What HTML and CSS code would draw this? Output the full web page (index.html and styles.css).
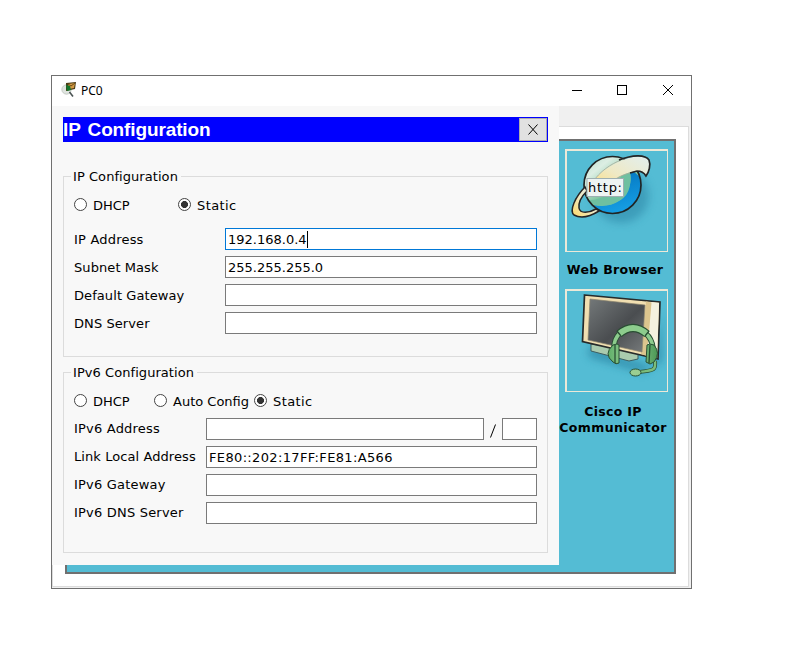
FILE: index.html
```html
<!DOCTYPE html>
<html lang="en">
<head>
<meta charset="utf-8">
<title>PC0</title>
<link rel="stylesheet" href="styles.css">
</head>
<body>
<main class="window">
  <header class="titlebar">
    <svg class="app-icon" width="16" height="16" viewBox="0 0 16 16">
      <circle cx="5.500" cy="7.500" r="4.700" fill="#dfe4df" stroke="#b5bcb5" stroke-width=".7"/>
      <path d="M5 1L15 0L14 7L5 9Z" fill="#493c16"/>
      <path d="M7 2L14 1L13 6L8 7Z" fill="#d39a45"/>
      <path d="M7 2L10 4L14 1" fill="none" stroke="#6b4b12"/>
      <path d="M5 3L9 4L10 8L6 9Z" fill="#13752a"/>
      <path d="M8.500 10L12 14.500" stroke="#4c5555" stroke-width="1.600"/>
    </svg>
    <span class="window-name">PC0</span>
    <svg class="controls" width="104" height="14" viewBox="0 0 104 14" fill="none" stroke="#000" shape-rendering="crispEdges">
      <path d="M1 7.500H11M46.500 2.500H55.500V11.500H46.500Z"/>
      <path d="M92 2L102 12M102 2L92 12" shape-rendering="auto"/>
    </svg>
  </header>
  <div class="client">
    <div class="tab-pane">
      <div class="desktop">
        <div class="apps">
          <div class="tile">
            <svg width="100" height="100" viewBox="0 0 100 100">
              <defs>
                <linearGradient id="globe" x2=".8" y2="1"><stop offset="0" stop-color="#b8dccb"/><stop offset=".25" stop-color="#dceee3"/><stop offset=".58" stop-color="#7fc5a0"/><stop offset="1" stop-color="#43b2ab"/></linearGradient>
                <linearGradient id="sea" x2=".3" y2="1"><stop offset="0" stop-color="#0070bc"/><stop offset="1" stop-color="#159ce1"/></linearGradient>
                <linearGradient id="ring" x1="1" x2="0" y2="1"><stop offset="0" stop-color="#e2efef"/><stop offset=".5" stop-color="#efe9c4"/><stop offset="1" stop-color="#ffd968"/></linearGradient>
                <filter id="soft" x="-40%" y="-40%" width="180%" height="180%"><feGaussianBlur stdDeviation="4"/></filter>
              </defs>
              <ellipse cx="54" cy="45" rx="28" ry="27" fill="#277fa0" opacity=".5" filter="url(#soft)"/>
              <circle cx="45.500" cy="34" r="28.500" fill="url(#globe)"/>
              <path d="M66 20L73 26Q77 43 65 55Q51 66 34 60Q28 57 26 54Q53 59 62 36Q65 28 63 22Z" fill="url(#sea)"/>
              <path d="M63 22Q66 44 50 51Q38 57 25 53L22 49Q44 49 54 25Z" fill="#6ec0a0"/>
              <circle cx="45.500" cy="34" r="28.500" fill="none" stroke="#202424" stroke-width="1.700"/>
              <path d="M18 36C8 46 2 60 7 64C14 68 24 65 32 60L29 58C22 62 13 63 12 57C11 50 15 45 20 40Z" fill="url(#ring)" stroke="#252525" stroke-width="1.500"/>
              <path d="M25 32C33 20 50 9 66 6Q77 4 82 9C84 14 82 21 79 25Q76 20 70 20C58 21 47 28 37 37L20 44Z" fill="url(#ring)"/>
              <path d="M25 32C33 20 44 13 54 9M37 37C47 28 54 24 63 22" fill="none" stroke="#a5aa98" stroke-width=".8"/>
              <path d="M52 9C65 4 78 3 82 9C84 14 82 21 79 25Q76 20 70 20L63 22" fill="none" stroke="#252525" stroke-width="1.700"/>
              <rect x="20" y="27.500" width="36.500" height="18" fill="#edf4f3" stroke="#9eafb1"/>
              <text class="http" x="21" y="40.500" textLength="34">http:</text>
            </svg>
          </div>
          <p class="caption browser">Web Browser</p>
          <div class="tile">
            <svg width="100" height="100" viewBox="0 0 100 100">
              <defs>
                <linearGradient id="screen" x2="1" y2="1"><stop offset="0" stop-color="#74797a"/><stop offset=".55" stop-color="#4a4d50"/><stop offset="1" stop-color="#777b7c"/></linearGradient>
                <linearGradient id="green" x2="1"><stop offset="0" stop-color="#5fae68"/><stop offset=".45" stop-color="#a1d59c"/><stop offset="1" stop-color="#4b9855"/></linearGradient>
              </defs>
              <path d="M22 54L85 76L95 21L95 70L76 82L22 66Z" fill="#20799a" opacity=".6" filter="url(#soft)"/>
              <path d="M24 53V60L62 70L71 68V60Z" fill="#a9cbae" stroke="#3e5e60"/>
              <path d="M17.500 4L93 11L91 68L15.500 50.500Z" fill="#f1dfb1" stroke="#272b2b" stroke-width="1.700"/>
              <path d="M84 11L92 12L90 66L80 64Z" fill="#f5f2df"/>
              <path d="M79 10.500L84.500 11.500L80 65L74 63Z" fill="#dcc58e"/>
              <path d="M23 8L78 14L75 61L21 49Z" fill="url(#screen)" stroke="#8a826d" stroke-width=".7"/>
              <g fill="none">
                <path d="M47 57C47 31 83 31 86 57" stroke="#284d32" stroke-width="5.500"/>
                <path d="M52 43Q66 31 80 43" stroke="#284d32" stroke-width="8"/>
                <path d="M47 57C47 31 83 31 86 57" stroke="#8dcc8d" stroke-width="3.600"/>
                <path d="M52 43Q66 31 80 43" stroke="#8dcc8d" stroke-width="6"/>
                <path d="M88 70C89 80 86 79 73 81" stroke="#284d32" stroke-width="4"/>
                <path d="M88 70C89 80 86 79 73 81" stroke="#7cbd7b" stroke-width="2.500"/>
              </g>
              <path d="M46 54Q51 52 52 54V72Q49 74 46 71Q36 63 46 54ZM80 54Q82 52 87 54Q94 62 87 71L83 73L79 71Z" fill="url(#green)" stroke="#285033"/>
              <path d="M48 54V72M83 54L82 72M50 40L54 45M82 40L78 45" stroke="#285033" stroke-width="1.300"/>
              <ellipse cx="68.500" cy="81.500" rx="5.500" ry="3.500" fill="#9bce91" stroke="#285033"/>
            </svg>
          </div>
          <p class="caption cisco"><span class="w1">Cisco IP</span><br><span class="w2">Communicator</span></p>
        </div>
      </div>
    </div>
    <section class="dialog">
      <div class="dialog-head">
        <h1>IP Configuration</h1>
        <button class="close" aria-label="Close"><svg width="10" height="11" viewBox="0 0 10 11"><path d="M.5 .5L9.500 10.500M9.500 .5L.5 10.500" stroke="#000" fill="none"/></svg></button>
      </div>
      <div class="group v4">
        <div class="legend"><span>IP Configuration</span></div>
        <div class="radios">
          <div class="radio"><i></i><span>DHCP</span></div>
          <div class="radio"><i class="on"></i><span class="static">Static</span></div>
        </div>
        <div class="rows">
          <div class="row"><span class="label wide">IP Address</span><div class="field focus"><span class="ip">192.168.0.4</span></div></div>
          <div class="row"><span class="label">Subnet Mask</span><div class="field"><span class="mask">255.255.255.0</span></div></div>
          <div class="row"><span class="label">Default Gateway</span><div class="field"></div></div>
          <div class="row"><span class="label">DNS Server</span><div class="field"></div></div>
        </div>
      </div>
      <div class="group v6">
        <div class="legend"><span>IPv6 Configuration</span></div>
        <div class="radios">
          <div class="radio"><i></i><span>DHCP</span></div>
          <div class="radio"><i></i><span>Auto Config</span></div>
          <div class="radio"><i class="on"></i><span class="static">Static</span></div>
        </div>
        <div class="rows">
          <div class="row"><span class="label wide">IPv6 Address</span><div class="field"></div><span class="slash"><svg width="6" height="14" viewBox="0 0 6 14"><path d="M.5 13.500L5.500 .5" stroke="#000"/></svg></span><div class="field prefix"></div></div>
          <div class="row"><span class="label">Link Local Address</span><div class="field"><span class="link-local">FE80::202:17FF:FE81:A566</span></div></div>
          <div class="row"><span class="label wide">IPv6 Gateway</span><div class="field"></div></div>
          <div class="row"><span class="label wide">IPv6 DNS Server</span><div class="field"></div></div>
        </div>
      </div>
    </section>
  </div>
</main>
</body>
</html>
```
FILE: styles.css
```css
* { box-sizing: border-box; }
body { margin: 0; background: #fff; color: #000; font: 13px/16px "DejaVu Sans", sans-serif; white-space: nowrap; }
.window { width: 641px; height: 514px; margin: 75px 0 0 51px; border: 1px solid #707070; background: #fff; }
.titlebar { height: 30px; display: flex; align-items: center; padding: 0 16px 2px 9px; }
.app-icon { display: block; }
.window-name { margin-left: 4px; padding-top: 1px; font: 12px/16px "Noto Sans", sans-serif; }
.controls { margin-left: auto; }
.client { position: relative; height: 482px; padding: 20px 2px 1px 0; background: #f0f0f0; }
.tab-pane { height: 461px; padding: 12px 12px 12px 12px; border: 1px solid #dcdcdc; background: #fff; }
.desktop { height: 435px; border: 2px solid #707070; background: #54bcd4; display: flex; justify-content: flex-end; }
.apps { width: 115px; padding-top: 8px; }
.tile { width: 103px; height: 103px; margin-left: 6px; border: solid #ece9d8; border-width: 2px 1px 1px 2px; }
.tile svg { display: block; }
.caption { margin: 0; width: 112px; text-align: center; font-weight: bold; font-size: 12.5px; line-height: 16px; letter-spacing: .3px; }
.browser { height: 37px; padding-top: 10px; }
.cisco { padding-top: 12px; width: 108px; }
.w2 { letter-spacing: .42px; }
.http { font-size: 13px; }

.dialog { position: absolute; left: 0; top: 0; width: 507px; height: 459px; padding: 11px; background: #f8f8f8; }
.dialog-head { height: 25px; display: flex; align-items: center; justify-content: space-between; background: #00f; padding: 0 1px 0 0; }
h1 { margin: 0; color: #fff; font: bold 19px/24px "Liberation Sans", Arial, sans-serif; letter-spacing: -.12px; word-spacing: 2px; }
.close { width: 28px; height: 23px; padding: 0; display: flex; align-items: center; justify-content: center; border: 1px solid #adadad; border-radius: 0; background: #e1e1e1; }
.group { width: 485px; height: 181px; border: 1px solid #dcdcdc; }
.v4 { margin-top: 34px; }
.v6 { margin-top: 15px; }
.legend { height: 17px; margin-top: -9px; padding-left: 7px; }
.legend span { display: inline-block; padding: 0 3px 0 2px; background: #f8f8f8; line-height: 17px; letter-spacing: .06px; }
.radios { display: flex; gap: 49px; height: 16px; padding-left: 10px; margin-top: 12px; }
.v6 .radios { gap: 24px; margin-top: 12px; }
.radio { display: flex; align-items: flex-start; width: 55px; gap: 6px; }
.radio span { padding-top: 1px; }
.static { letter-spacing: .4px; }
.radio i { flex: none; width: 13px; height: 13px; margin-top: 1px; border: 1px solid #444; border-radius: 50%; background: #fff; }
.radio .on { background: radial-gradient(circle, #333 0 3.2px, #fff 3.8px); }
.v6 .radio { width: 56px; }
.v6 .radio:nth-child(2) { width: 76px; }
.rows { display: grid; gap: 6px; padding: 0 10px; margin-top: 15px; }
.v6 .rows { margin-top: 9px; }
.row { display: flex; align-items: center; height: 22px; }
.label { width: 151px; flex: none; letter-spacing: .08px; }
.label.wide { letter-spacing: .2px; }
.v4 .label { padding-top: 2px; }
.v6 .label { width: 132px; }
.field { flex: 1; height: 22px; padding: 2px 0 0 2px; border: 1px solid #7a7a7a; background: #fff; line-height: 18px; }
.link-local { letter-spacing: .35px; }
.focus { border-color: #0078d7; padding-left: 3px; }
.ip { display: inline-block; height: 17px; line-height: 18px; border-right: 1px solid #000; margin-left: -1px; vertical-align: top; }
.slash { width: 18px; display: flex; justify-content: center; padding-top: 3px; }
.prefix { flex: 0 0 35px; }
```
